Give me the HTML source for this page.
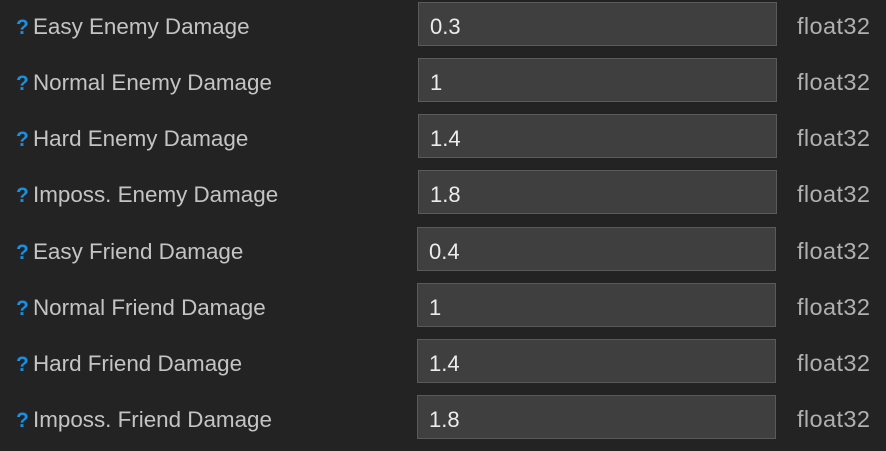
<!DOCTYPE html>
<html><head><meta charset="utf-8"><style>
html,body{margin:0;padding:0;background:#232323;width:886px;height:451px;overflow:hidden;font-family:"Liberation Sans",sans-serif;}
.row{position:absolute;left:0;width:886px;height:44px;}
.q{position:absolute;left:16px;top:14px;font-size:21px;font-weight:bold;color:#1a8fe0;}
.l{position:absolute;left:33px;top:12px;font-size:22.4px;color:#c4c4c4;}
.b{position:absolute;left:418px;top:0;width:357px;height:42px;background:#3f3f3f;border:1px solid #5a5a5a;}
.v{position:absolute;left:11px;top:11px;font-size:22px;color:#ececec;}
.t{position:absolute;left:797px;top:11px;font-size:23.5px;color:#b0b0b0;letter-spacing:0.4px;}
</style></head><body>
<div class="row" style="top:2px"><span class="q">?</span><span class="l">Easy Enemy Damage</span><div class="b"><span class="v">0.3</span></div><span class="t">float32</span></div>
<div class="row" style="top:58px"><span class="q">?</span><span class="l">Normal Enemy Damage</span><div class="b"><span class="v">1</span></div><span class="t">float32</span></div>
<div class="row" style="top:114px"><span class="q">?</span><span class="l">Hard Enemy Damage</span><div class="b"><span class="v">1.4</span></div><span class="t">float32</span></div>
<div class="row" style="top:170px"><span class="q">?</span><span class="l">Imposs. Enemy Damage</span><div class="b"><span class="v">1.8</span></div><span class="t">float32</span></div>
<div class="row" style="top:227px"><span class="q">?</span><span class="l">Easy Friend Damage</span><div class="b" style="left:417px"><span class="v">0.4</span></div><span class="t">float32</span></div>
<div class="row" style="top:283px"><span class="q">?</span><span class="l">Normal Friend Damage</span><div class="b" style="left:417px"><span class="v">1</span></div><span class="t">float32</span></div>
<div class="row" style="top:339px"><span class="q">?</span><span class="l">Hard Friend Damage</span><div class="b" style="left:417px"><span class="v">1.4</span></div><span class="t">float32</span></div>
<div class="row" style="top:395px"><span class="q">?</span><span class="l">Imposs. Friend Damage</span><div class="b" style="left:417px"><span class="v">1.8</span></div><span class="t">float32</span></div>
</body></html>
